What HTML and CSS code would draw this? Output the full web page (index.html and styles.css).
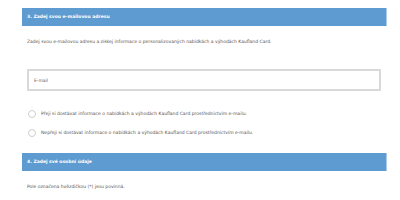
FILE: index.html
```html
<!DOCTYPE html>
<html lang="cs">
<head>
    <meta charset="UTF-8">
    <meta name="viewport" content="width=device-width, initial-scale=1.0">
    <title>Kaufland Card - registrace</title>
    <link rel="stylesheet" href="styles.css">
</head>
<body>
    <div class="form">
        <div class="section-head">3. Zadej svou e-mailovou adresu</div>
        <div class="section-body">
            <p class="intro">Zadej svou e-mailovou adresu a získej informace o personalizovaných nabídkách a výhodách Kaufland Card.</p>

            <input type="text" class="email" placeholder="E-mail">

            <label class="radio-row">
                <span class="radio"></span>
                Přeji si dostávat informace o nabídkách a výhodách Kaufland Card prostřednictvím e-mailu.
            </label>
            <label class="radio-row">
                <span class="radio"></span>
                Nepřeji si dostávat informace o nabídkách a výhodách Kaufland Card prostřednictvím e-mailu.
            </label>
        </div>

        <div class="section-head second">4. Zadej své osobní údaje</div>
        <div class="section-body">
            <p class="intro">Pole označena hvězdičkou (*) jsou povinná.</p>
        </div>
    </div>
</body>
</html>
```

FILE: styles.css
```css
body { margin: 0; background-color: #fff; font-family: "DejaVu Sans", "Open Sans", sans-serif; color: #555; }
.form { margin: 8px 0 0 22px; width: 365px; }
.section-head { height: 18px; line-height: 18px; padding-left: 5px; background-color: #5e9bd1; border-right: 1px solid #a9cbe9; color: #fff; font-size: 4.5px; font-weight: 600; }
.section-head.second { margin-top: 16px; }
.section-body { padding-left: 5px; }
.intro { margin: 0; padding-top: 13px; font-size: 4.5px; line-height: 6px; }
.email { display: block; box-sizing: border-box; width: 354px; height: 22px; margin-top: 24px; padding: 0 5px; border: 2px solid #d9d9d9; font-family: inherit; font-size: 4.5px; color: #555; outline: none; }
.email::placeholder { color: #666; }
.radio-row { display: flex; align-items: center; gap: 5px; margin-top: 10px; font-size: 4.5px; height: 9px; }
.radio-row:first-of-type { margin-top: 18px; }
.radio { width: 6px; height: 6px; margin-left: 1px; border: 1.5px solid #cfcfcf; border-radius: 50%; flex-shrink: 0; }
```
